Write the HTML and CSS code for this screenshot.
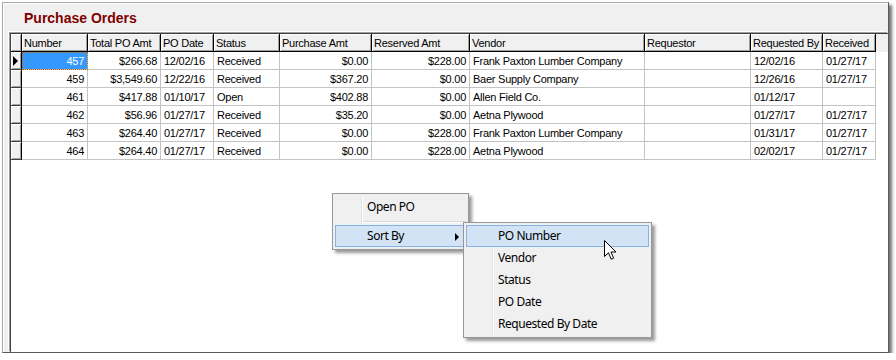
FILE: index.html
```html
<!DOCTYPE html>
<html lang="en">

<head>
    <meta charset="utf-8" />
    <title>Purchase Orders</title>
    <link rel="stylesheet" href="styles.css">
</head>

<body>
    <div class="window">
        <h1 class="title">Purchase Orders</h1>
        <div class="grid">
            <table class="orders">
                <colgroup>
                    <col class="c-ind"><col class="c-num"><col class="c-total"><col class="c-date"><col class="c-status">
                    <col class="c-purch"><col class="c-res"><col class="c-vendor"><col class="c-req"><col class="c-reqby">
                    <col class="c-recv"><col>
                </colgroup>
                <thead>
                    <tr>
                        <th class="corner"></th>
                        <th>Number</th>
                        <th>Total PO Amt</th>
                        <th>PO Date</th>
                        <th>Status</th>
                        <th>Purchase Amt</th>
                        <th>Reserved Amt</th>
                        <th>Vendor</th>
                        <th>Requestor</th>
                        <th>Requested By</th>
                        <th>Received</th>
                        <th class="fill"></th>
                    </tr>
                </thead>
                <tbody>
                    <tr>
                        <td class="ind"><span class="arrow"></span></td>
                        <td class="num selected">457</td>
                        <td class="num">$266.68</td>
                        <td>12/02/16</td>
                        <td>Received</td>
                        <td class="num">$0.00</td>
                        <td class="num">$228.00</td>
                        <td>Frank Paxton Lumber Company</td>
                        <td></td>
                        <td>12/02/16</td>
                        <td>01/27/17</td>
                        <td class="fill"></td>
                    </tr>
                    <tr>
                        <td class="ind"></td>
                        <td class="num">459</td>
                        <td class="num">$3,549.60</td>
                        <td>12/22/16</td>
                        <td>Received</td>
                        <td class="num">$367.20</td>
                        <td class="num">$0.00</td>
                        <td>Baer Supply Company</td>
                        <td></td>
                        <td>12/26/16</td>
                        <td>01/27/17</td>
                        <td class="fill"></td>
                    </tr>
                    <tr>
                        <td class="ind"></td>
                        <td class="num">461</td>
                        <td class="num">$417.88</td>
                        <td>01/10/17</td>
                        <td>Open</td>
                        <td class="num">$402.88</td>
                        <td class="num">$0.00</td>
                        <td>Allen Field Co.</td>
                        <td></td>
                        <td>01/12/17</td>
                        <td></td>
                        <td class="fill"></td>
                    </tr>
                    <tr>
                        <td class="ind"></td>
                        <td class="num">462</td>
                        <td class="num">$56.96</td>
                        <td>01/27/17</td>
                        <td>Received</td>
                        <td class="num">$35.20</td>
                        <td class="num">$0.00</td>
                        <td>Aetna Plywood</td>
                        <td></td>
                        <td>01/27/17</td>
                        <td>01/27/17</td>
                        <td class="fill"></td>
                    </tr>
                    <tr>
                        <td class="ind"></td>
                        <td class="num">463</td>
                        <td class="num">$264.40</td>
                        <td>01/27/17</td>
                        <td>Received</td>
                        <td class="num">$0.00</td>
                        <td class="num">$228.00</td>
                        <td>Frank Paxton Lumber Company</td>
                        <td></td>
                        <td>01/31/17</td>
                        <td>01/27/17</td>
                        <td class="fill"></td>
                    </tr>
                    <tr>
                        <td class="ind"></td>
                        <td class="num">464</td>
                        <td class="num">$264.40</td>
                        <td>01/27/17</td>
                        <td>Received</td>
                        <td class="num">$0.00</td>
                        <td class="num">$228.00</td>
                        <td>Aetna Plywood</td>
                        <td></td>
                        <td>02/02/17</td>
                        <td>01/27/17</td>
                        <td class="fill"></td>
                    </tr>
                </tbody>
            </table>
        </div>

        <!-- right click menu -->
        <div class="menu main-menu">
            <div class="item">Open PO</div>
            <div class="sep"></div>
            <div class="item active">Sort By<span class="sub-arrow"></span></div>
        </div>
        <div class="menu sub-menu">
            <div class="item active">PO Number</div>
            <div class="item">Vendor</div>
            <div class="item">Status</div>
            <div class="item">PO Date</div>
            <div class="item">Requested By Date</div>
        </div>
        <svg class="cursor" width="14" height="21" viewBox="0 0 14 21">
            <path d="M0.5 0.5 L0.5 16.5 L4.5 12.8 L7.2 19.2 L9.6 18.2 L7 12 L12 12 Z" fill="#fff" stroke="#000" stroke-width="1" stroke-linejoin="miter" />
        </svg>
    </div>
</body>

</html>
```

FILE: styles.css
```css
body {
    margin: 0;
    background: #fff;
    overflow: hidden;
}

.window {
    position: relative;
    margin: 2px 0 0 2px;
    width: 887px;
    height: 351px;
    box-sizing: border-box;
    display: flex;
    flex-direction: column;
    background: #f0f0f0;
    border-top: 1px solid #a8a8a8;
    border-left: 1px solid #a8a8a8;
    border-right: 1px solid #5a5a5a;
    border-bottom: 1px solid #5a5a5a;
    box-shadow: 3px 3px 3px rgba(0, 0, 0, 0.55), inset 1px 1px 0 #fff;
    font-family: "Liberation Sans", Arial, sans-serif;
}

.title {
    margin: 7px 0 0 21px;
    height: 23px;
    font-size: 14px;
    line-height: 16px;
    font-weight: bold;
    color: #800000;
}

.grid {
    flex: 1;
    margin-left: 7px;
    background: #fff;
    border-top: 1px solid #404040;
    border-left: 1px solid #404040;
    box-shadow: -1px -1px 0 #a0a0a0, -2px -2px 0 #fff;
    overflow: hidden;
}

.orders {
    width: 100%;
    table-layout: fixed;
    border-collapse: separate;
    border-spacing: 0;
    font-size: 11px;
    letter-spacing: -0.25px;
    color: #000;
}

.c-ind { width: 11px; }
.c-num { width: 66px; }
.c-total { width: 73px; }
.c-date { width: 53px; }
.c-status { width: 66px; }
.c-purch { width: 92px; }
.c-res { width: 98px; }
.c-vendor { width: 175px; }
.c-req { width: 106px; }
.c-reqby { width: 72px; }
.c-recv { width: 53px; }

.orders th {
    height: 18px;
    box-sizing: border-box;
    padding: 0 0 0 2px;
    text-align: left;
    font-weight: normal;
    white-space: nowrap;
    overflow: hidden;
    background: #f0f0f0;
    border-right: 1px solid #000;
    border-bottom: 1px solid #000;
    box-shadow: inset 1px 1px 0 #fff, inset -1px -1px 0 #a0a0a0;
}

.orders td {
    height: 18px;
    box-sizing: border-box;
    padding: 0 0 0 3px;
    white-space: nowrap;
    overflow: hidden;
    border-right: 1px solid #c4c4c4;
    border-bottom: 1px solid #c4c4c4;
}

.orders td.num {
    text-align: right;
    padding: 0 3px 0 0;
}

.orders th.fill {
    border: none;
    box-shadow: none;
}

.orders td.fill {
    border: none;
}

.orders td.ind {
    position: relative;
    padding: 0;
    background: #f0f0f0;
    border-right: 1px solid #000;
    border-bottom: 1px solid #404040;
    box-shadow: inset 1px 1px 0 #fff, inset -1px -1px 0 #a0a0a0;
}

.arrow {
    position: absolute;
    left: 2px;
    top: 4px;
    border-left: 5px solid #000;
    border-top: 5px solid transparent;
    border-bottom: 5px solid transparent;
}

.orders td.selected {
    background: #3399ff;
    color: #fff;
    outline: 1px dotted #c86400;
    outline-offset: -1px;
}

/* context menu */
.menu {
    position: absolute;
    box-sizing: border-box;
    background: #f0f0f0;
    border: 1px solid #979797;
    padding: 2px;
    box-shadow: 3px 3px 3px rgba(0, 0, 0, 0.4);
    font-family: "Noto Sans", sans-serif;
    font-size: 12px;
    letter-spacing: -0.45px;
    color: #000;
}

.menu::before {
    content: "";
    position: absolute;
    left: 28px;
    top: 2px;
    bottom: 2px;
    width: 1px;
    background: #e2e3e3;
    box-shadow: 1px 0 0 #fff;
}

.main-menu {
    left: 329px;
    top: 190px;
    width: 137px;
}

.sub-menu {
    left: 460px;
    top: 219px;
    width: 189px;
    z-index: 2;
}

.item {
    position: relative;
    height: 22px;
    line-height: 20px;
    box-sizing: border-box;
    padding-left: 31px;
    border: 1px solid transparent;
    z-index: 1;
}

.item.active {
    background: #d1e3f5;
    border-color: #84b4e6;
}

.sep {
    height: 7px;
    margin-left: 28px;
    position: relative;
}

.sep::after {
    content: "";
    position: absolute;
    left: 0;
    right: 0;
    top: 3px;
    height: 1px;
    background: #d7d7d7;
    box-shadow: 0 1px 0 #fff;
}

.sub-arrow {
    position: absolute;
    left: 119px;
    top: 7px;
    border-left: 4px solid #000;
    border-top: 4px solid transparent;
    border-bottom: 4px solid transparent;
}

.cursor {
    position: absolute;
    left: 601px;
    top: 237px;
    z-index: 3;
}
```
